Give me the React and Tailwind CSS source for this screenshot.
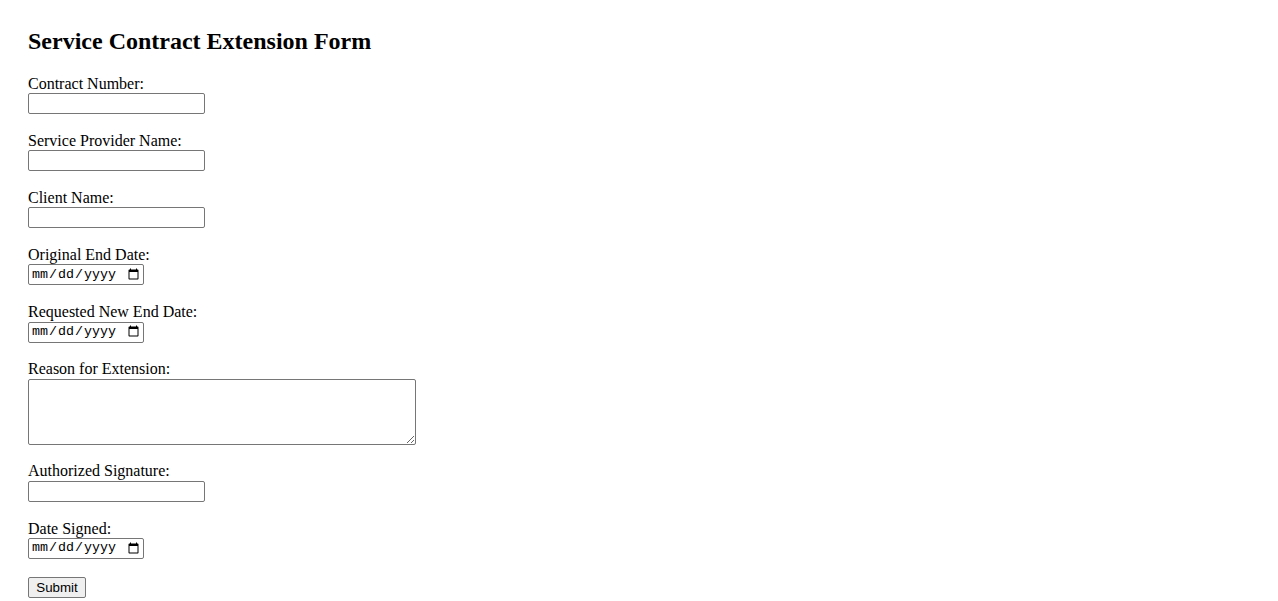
export default function App() {
  const fields = [
    { label: 'Contract Number:', type: 'text' },
    { label: 'Service Provider Name:', type: 'text' },
    { label: 'Client Name:', type: 'text' },
    { label: 'Original End Date:', type: 'date' },
    { label: 'Requested New End Date:', type: 'date' },
    { label: 'Reason for Extension:', type: 'textarea' },
    { label: 'Authorized Signature:', type: 'text' },
    { label: 'Date Signed:', type: 'date' },
  ]

  return (
    <div className="min-h-screen bg-white px-[28px] pt-[26.6px] text-black font-['Liberation_Serif',serif] text-[16px]">
      <h2 className="text-[24px] font-bold leading-[28px] mb-[20px]">Service Contract Extension Form</h2>
      <form onSubmit={e => e.preventDefault()}>
        {fields.map(f => (
          <div key={f.label} className="mb-[17.75px]">
            <label className="block h-[18.4px] leading-[18.4px]">{f.label}</label>
            {f.type === 'text' && (
              <input
                type="text"
                className="block w-[177px] h-[21px] border border-[#767676] rounded-[2px] px-[2px] text-[13.33px] font-['Liberation_Sans',sans-serif]"
              />
            )}
            {f.type === 'date' && (
              <input
                type="date"
                className="block w-[116px] h-[21px] border border-[#767676] rounded-[2px] pl-[2px] pr-[1px] text-[13.33px] font-['Liberation_Mono',monospace]"
              />
            )}
            {f.type === 'textarea' && (
              <textarea
                rows={4}
                className="block w-[388px] h-[66px] border border-[#767676] rounded-[2px] p-[2px] text-[13.33px] font-['Liberation_Mono',monospace]"
              />
            )}
          </div>
        ))}
        <button
          type="submit"
          className="block h-[21px] w-[58px] bg-[#efefef] border border-[#767676] rounded-[2px] text-[13.33px] leading-[17px] font-['Liberation_Sans',sans-serif]"
        >
          Submit
        </button>
      </form>
    </div>
  )
}
